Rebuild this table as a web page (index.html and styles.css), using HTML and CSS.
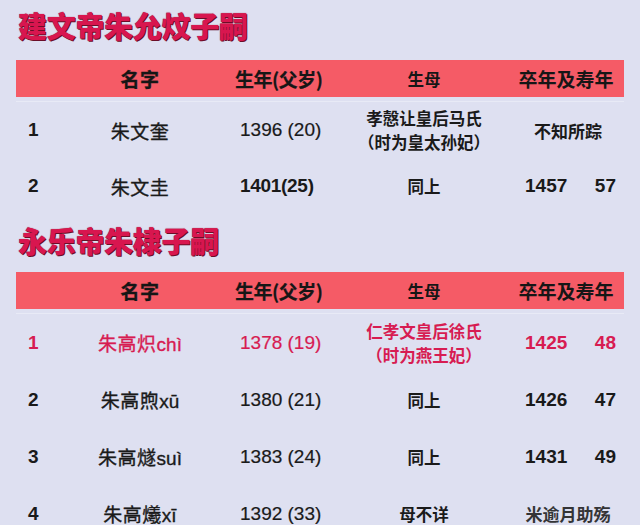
FILE: index.html
```html
<!DOCTYPE html>
<html lang="zh">
<head>
<meta charset="utf-8">
<title>子嗣</title>
<link rel="stylesheet" href="styles.css">
</head>
<body>
<section class="block block-one">
  <h1 class="title">建文帝朱允炆子嗣</h1>
  <div class="table">
    <div class="row head">
      <div class="c c-num"></div>
      <div class="c c-name">名字</div>
      <div class="c c-birth">生年(父岁)</div>
      <div class="c c-mother">生母</div>
      <div class="c c-death">卒年及寿年</div>
    </div>
    <div class="body">
      <div class="row r1">
        <div class="c c-num">1</div>
        <div class="c c-name">朱文奎</div>
        <div class="c c-birth">1396 (20)</div>
        <div class="c c-mother bold"><span class="ln">孝慤让皇后马氏</span><span class="ln">（时为皇太孙妃）</span></div>
        <div class="c c-death center bold-cjk">不知所踪</div>
      </div>
      <div class="row r1">
        <div class="c c-num">2</div>
        <div class="c c-name">朱文圭</div>
        <div class="c c-birth bold-num">1401(25)</div>
        <div class="c c-mother bold">同上</div>
        <div class="c c-death"><span class="yr">1457</span><span class="age">57</span></div>
      </div>
    </div>
  </div>
</section>

<section class="block block-two">
  <h1 class="title">永乐帝朱棣子嗣</h1>
  <div class="table">
    <div class="row head">
      <div class="c c-num"></div>
      <div class="c c-name">名字</div>
      <div class="c c-birth">生年(父岁)</div>
      <div class="c c-mother">生母</div>
      <div class="c c-death">卒年及寿年</div>
    </div>
    <div class="body">
      <div class="row r2 hl">
        <div class="c c-num">1</div>
        <div class="c c-name">朱高炽<span class="py">chì</span></div>
        <div class="c c-birth">1378 (19)</div>
        <div class="c c-mother bold"><span class="ln">仁孝文皇后徐氏</span><span class="ln">（时为燕王妃）</span></div>
        <div class="c c-death"><span class="yr">1425</span><span class="age">48</span></div>
      </div>
      <div class="row r2">
        <div class="c c-num">2</div>
        <div class="c c-name">朱高煦<span class="py">xū</span></div>
        <div class="c c-birth">1380 (21)</div>
        <div class="c c-mother bold">同上</div>
        <div class="c c-death"><span class="yr">1426</span><span class="age">47</span></div>
      </div>
      <div class="row r2">
        <div class="c c-num">3</div>
        <div class="c c-name">朱高燧<span class="py">suì</span></div>
        <div class="c c-birth">1383 (24)</div>
        <div class="c c-mother bold">同上</div>
        <div class="c c-death"><span class="yr">1431</span><span class="age">49</span></div>
      </div>
      <div class="row r2">
        <div class="c c-num">4</div>
        <div class="c c-name">朱高爔<span class="py">xī</span></div>
        <div class="c c-birth">1392 (33)</div>
        <div class="c c-mother bold">母不详</div>
        <div class="c c-death center watermark">米逾月助殇</div>
      </div>
    </div>
  </div>
</section>
</body>
</html>
```

FILE: styles.css
```css
html, body {
  margin: 0;
  padding: 0;
}
body {
  width: 640px;
  height: 525px;
  overflow: hidden;
  background: #dee0f1;
  font-family: "Liberation Sans", "Noto Sans CJK SC", sans-serif;
  color: #1a1a1a;
}
.block {
  padding: 0 16px;
}
.block-one {
  padding-top: 11px;
}
.block-two {
  padding-top: 12px;
}
.title {
  margin: 0 0 0 2px;
  font-family: "Noto Sans CJK SC", sans-serif;
  font-weight: 900;
  font-size: 29px;
  line-height: 29px;
  height: 29px;
  color: #d8164f;
  text-shadow: 1px 1px 0 #6b0d28, 0 0 1px #8a1030;
  letter-spacing: -0.3px;
}
.block-one .title {
  margin-bottom: 20px;
}
.block-two .title {
  margin-bottom: 17px;
}
.table {
  width: 608px;
}
.row {
  display: grid;
  grid-template-columns: 64px 120px 140px 168px 116px;
  align-items: center;
}
.head {
  height: 37px;
  background: #f55b66;
  font-family: "Noto Sans CJK SC", sans-serif;
  font-weight: 700;
  font-size: 19px;
  color: #161616;
}
.head .c-birth {
  padding-left: 35px;
  text-align: left;
  letter-spacing: -0.5px;
}
.head .c-death {
  text-align: center;
  padding: 0;
  display: block;
}
.body {
  margin-top: 4px;
  border-top: 1px solid #e8eaf6;
}
.r1 {
  height: 56px;
}
.r2 {
  height: 57px;
}
.c {
  white-space: nowrap;
}
.c-num {
  padding-left: 12px;
  font-size: 19px;
  font-weight: 700;
}
.c-name {
  text-align: center;
  font-family: "Liberation Sans", "Noto Sans CJK SC", sans-serif;
  font-size: 19px;
  letter-spacing: 0.5px;
  -webkit-text-stroke: 0.35px currentColor;
}
.py {
  letter-spacing: 0;
}
.c-birth {
  padding-left: 40px;
  font-size: 19px;
  -webkit-text-stroke: 0.2px currentColor;
}
.bold-num {
  font-weight: 700;
  letter-spacing: -0.3px;
  -webkit-text-stroke: 0;
}
.c-mother {
  display: flex;
  flex-direction: column;
  align-items: center;
  font-family: "Noto Sans CJK SC", sans-serif;
  font-size: 16.5px;
  line-height: 24px;
}
.ln {
  display: block;
}
.bold {
  font-weight: 700;
}
.c-death {
  display: flex;
  justify-content: space-between;
  padding: 0 8px 0 17px;
  font-size: 19px;
  font-weight: 700;
}
.c-death.center {
  display: block;
  padding: 0;
  text-align: center;
  padding-left: 4px;
}
.bold-cjk {
  font-family: "Noto Sans CJK SC", sans-serif;
  font-size: 17px;
  font-weight: 700;
}
.watermark {
  font-family: "Noto Sans CJK SC", sans-serif;
  font-size: 17px;
  font-weight: 700;
  color: #222;
  opacity: 0.9;
}
.hl .c {
  color: #d71c52;
}
```
